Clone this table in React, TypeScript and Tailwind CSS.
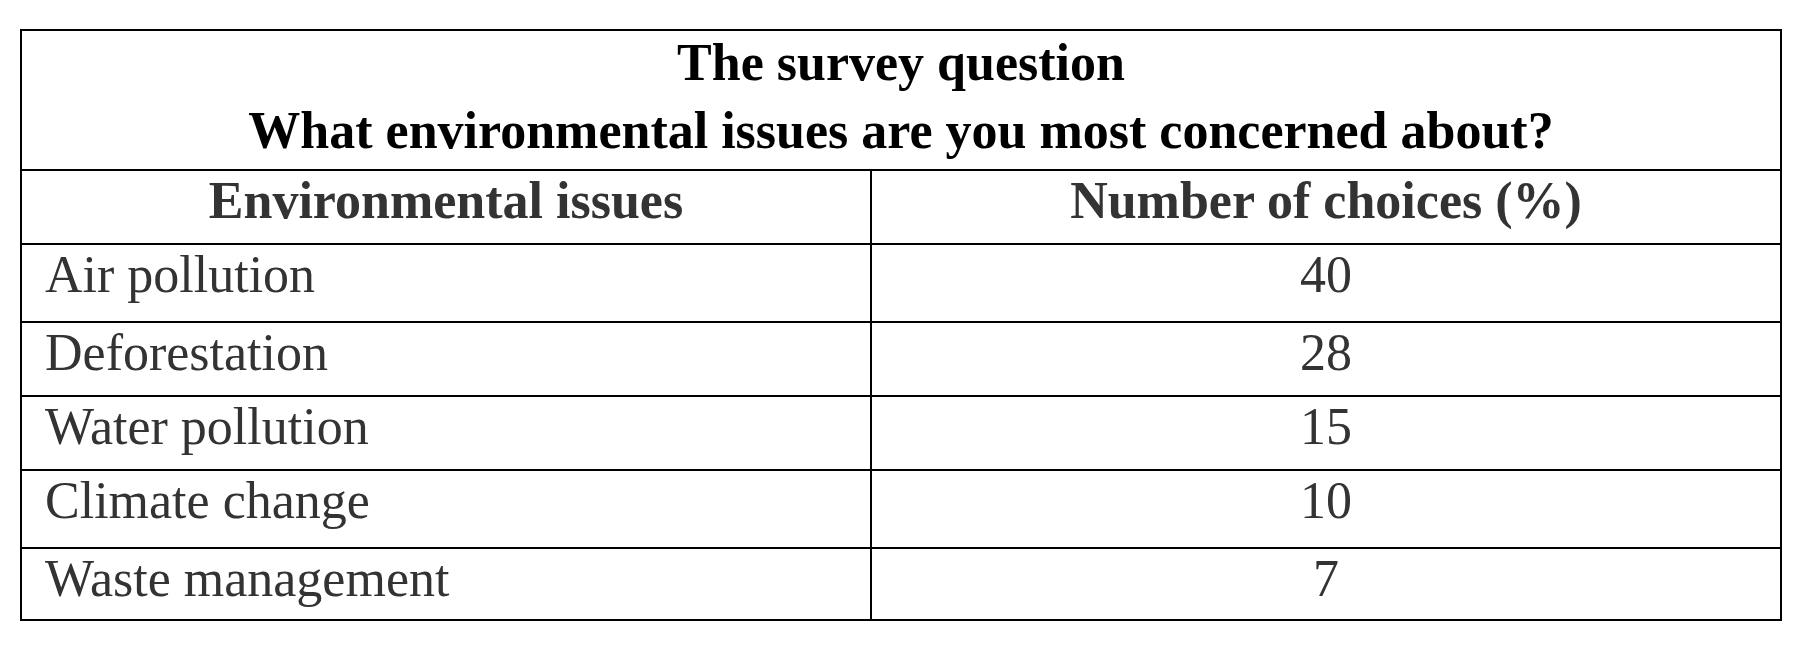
import React from 'react';

type Row = { issue: string; value: string; height: string };

// heights include the 2px bottom border (border-box)
const rows: Row[] = [
  { issue: 'Air pollution', value: '40', height: 'h-[78px]' },
  { issue: 'Deforestation', value: '28', height: 'h-[74px]' },
  { issue: 'Water pollution', value: '15', height: 'h-[74px]' },
  { issue: 'Climate change', value: '10', height: 'h-[78px]' },
  { issue: 'Waste management', value: '7', height: 'h-[70px]' },
];

const App: React.FC = () => {
  return (
    <div
      className="min-h-screen bg-white pt-[29px] pl-[20px] text-[52px] leading-[60px]"
      style={{ fontFamily: '"Liberation Serif", "Times New Roman", serif' }}
    >
      <div className="w-[1762px] border-2 border-black">
        {/* Survey question */}
        <div className="h-[140px] border-b-2 border-black pt-[2px] text-center font-bold text-black">
          <div>The survey question</div>
          <div className="mt-[8px]">What environmental issues are you most concerned about?</div>
        </div>

        {/* Column headers */}
        <div className="grid h-[74px] grid-cols-[850px_1fr] border-b-2 border-black font-bold text-[#333333]">
          <div className="border-r-2 border-black text-center">Environmental issues</div>
          <div className="text-center">Number of choices (%)</div>
        </div>

        {/* Data rows */}
        {rows.map((row, i) => (
          <div
            key={row.issue}
            className={`grid grid-cols-[850px_1fr] border-black text-[#333333] ${row.height} ${
              i < rows.length - 1 ? 'border-b-2' : ''
            }`}
          >
            <div className="border-r-2 border-black pl-[23px]">{row.issue}</div>
            <div className="text-center">{row.value}</div>
          </div>
        ))}
      </div>
    </div>
  );
};

export default App;
